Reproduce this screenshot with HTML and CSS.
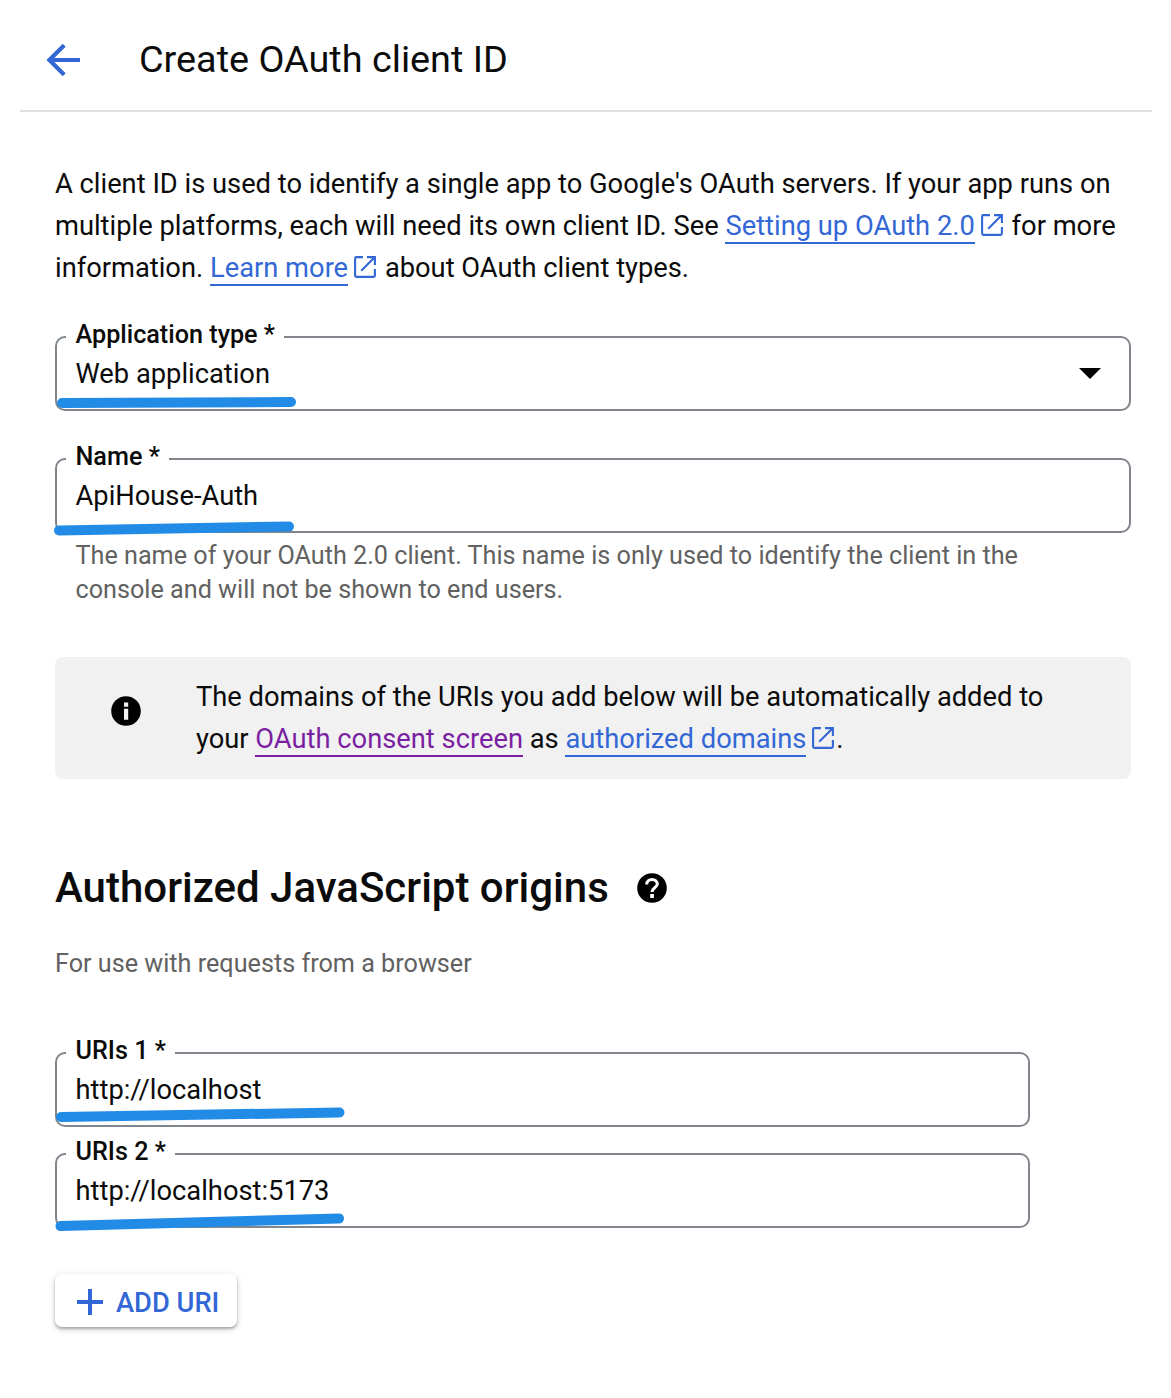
FILE: index.html
```html
<!DOCTYPE html>
<html lang="en">
<head>
<meta charset="utf-8">
<title>Create OAuth client ID</title>
<link rel="stylesheet" href="styles.css">
</head>
<body>
<svg width="0" height="0" class="defs" aria-hidden="true">
  <symbol id="external" viewBox="0 0 22 22"><path d="M9 1.1H2.4Q1.1 1.1 1.1 2.4v17.2q0 1.3 1.3 1.3h17.2q1.3 0 1.3-1.3V13M13 1.1h7.9V9M20.9 1.1 7.2 14.8" fill="none" stroke="currentColor" stroke-width="2.1"/></symbol>
</svg>
<header class="header">
  <svg class="back" width="34" height="34" viewBox="0 0 34 34"><path d="M34 17H4M18.200 2.200 3.400 17 18.200 31.800" fill="none" stroke="currentColor" stroke-width="4.200"/></svg>
  <h1 class="title">Create OAuth client ID</h1>
</header>
<main class="content">
  <p class="intro">A client ID is used to identify a single app to Google's OAuth servers. If your app runs on<br>multiple platforms, each will need its own client ID. See <a class="link">Setting up OAuth 2.0</a><svg class="ext"><use href="#external"/></svg> for more<br>information. <a class="link">Learn more</a><svg class="ext"><use href="#external"/></svg> about OAuth client types.</p>

  <fieldset class="field">
    <legend>Application type *</legend>
    <div class="value"><span>Web application</span><i class="caret"></i></div>
    <svg class="mark" width="300" height="30"><path d="M7 16 L236 15"/></svg>
  </fieldset>

  <fieldset class="field name">
    <legend>Name *</legend>
    <div class="value">ApiHouse-Auth</div>
    <svg class="mark" width="300" height="30"><path d="M4 21.500 L234 17.500"/></svg>
  </fieldset>
  <p class="hint">The name of your OAuth 2.0 client. This name is only used to identify the client in the<br>console and will not be shown to end users.</p>

  <div class="notice">
    <svg class="info" width="30" height="30" viewBox="0 0 30 30"><circle cx="15" cy="15" r="14.800"/><path d="M13 6.500h4.200v4.200h-4.200zM13 12.700h4.200v11h-4.200z" fill="#f1f1f1"/></svg>
    <p>The domains of the URIs you add below will be automatically added to<br>your <a class="link visited">OAuth consent screen</a> as <a class="link">authorized domains</a><svg class="ext"><use href="#external"/></svg>.</p>
  </div>

  <h2 class="section">Authorized JavaScript origins
    <svg class="help" width="30" height="30" viewBox="0 0 30 30"><circle cx="15" cy="15" r="14.800"/><path d="M9.700 11.500C9.700 4.800 20.300 4.800 20.300 11.300C20.300 14.300 15 14.800 15 19" fill="none" stroke="#fff" stroke-width="3"/><path d="M13.200 21h3.700v4h-3.700z" fill="#fff"/></svg>
  </h2>
  <p class="sub">For use with requests from a browser</p>

  <fieldset class="field uri">
    <legend>URIs 1 *</legend>
    <div class="value">http://localhost</div>
    <svg class="mark" width="300" height="30"><path d="M6 14 L284.500 9.500"/></svg>
  </fieldset>
  <fieldset class="field uri second">
    <legend>URIs 2 *</legend>
    <div class="value">http://localhost:5173</div>
    <svg class="mark" width="300" height="30"><path d="M5.500 22 L284 14.500"/></svg>
  </fieldset>

  <button class="add"><svg width="26" height="26" viewBox="0 0 26 26"><path d="M13 0v26M0 13h26" stroke="currentColor" stroke-width="4"/></svg><span>ADD URI</span></button>
</main>
</body>
</html>
```
FILE: styles.css
```css
* { box-sizing: border-box; }
body {
  margin: 0;
  background: #fff;
  color: #0b0b0b;
  font: 27.3px/42px Roboto, sans-serif;
  white-space: nowrap;
}
p, h1, h2 { margin: 0; }
.defs { position: absolute; }

.header {
  display: flex;
  align-items: center;
  height: 112px;
  margin: 0 19px 0 20px;
  padding: 9px 0 0 26px;
  border-bottom: 2px solid #e0e0e0;
}
.back { color: #3367d6; }
.title {
  margin: 0 0 2px 59px;
  font-size: 37.8px;
  font-weight: 400;
}

.content { padding: 51px 40px 60px 55px; }
.link {
  color: #3367d6;
  border-bottom: 2px solid currentColor;
}
.link.visited { color: #7b1fa2; }
.ext {
  width: 22px;
  height: 22px;
  margin: 0 2px 0 6px;
  color: #3367d6;
  vertical-align: -1px;
}

.field {
  position: relative;
  height: 86px;
  min-width: 0;
  margin: 36px 0 0;
  padding: 0 8.5px;
  border: 2px solid #80868b;
  border-radius: 10px;
}
.field legend {
  height: 24px;
  padding: 0 9px 0 10px;
  font-size: 25.2px;
  font-weight: 500;
  line-height: 20px;
}
.value {
  display: flex;
  justify-content: space-between;
  align-items: center;
  height: 50px;
  padding: 0 20px 0 10px;
}
.caret {
  margin-bottom: 2px;
  border: 11px solid transparent;
  border-top-color: #000;
  border-bottom: 0;
}
.mark {
  position: absolute;
  left: -2px;
  bottom: -8px;
  overflow: visible;
  fill: none;
  stroke: #228be6;
  stroke-width: 10px;
  stroke-linecap: round;
}
.name { margin-top: 36px; }
.hint {
  padding: 6px 0 0 20.5px;
  color: #616161;
  font-size: 25.2px;
  line-height: 34px;
}

.notice {
  display: flex;
  height: 122px;
  margin-top: 50px;
  padding: 19px 0 0 56px;
  border-radius: 8px;
  background: #f1f1f1;
}
.info { flex: none; margin: 20px 55px 0 0; }

.section {
  display: flex;
  align-items: center;
  gap: 28px;
  margin-top: 88px;
  font-size: 42px;
  font-weight: 500;
}
.sub {
  margin-top: 34px;
  color: #616161;
  font-size: 25.2px;
}
.uri { width: 975px; margin-top: 56px; }
.second { margin-top: 15px; }

.add {
  display: flex;
  align-items: center;
  gap: 13px;
  height: 53px;
  margin-top: 46px;
  padding: 3px 18px 0 22px;
  border: 0;
  border-radius: 7px;
  background: #fff;
  color: #3367d6;
  box-shadow: 0 2px 3px rgba(0,0,0,.3), 0 2px 8px rgba(0,0,0,.12);
  font: 500 27.3px Roboto, sans-serif;
}
.add span { padding-top: 2px; }
```
